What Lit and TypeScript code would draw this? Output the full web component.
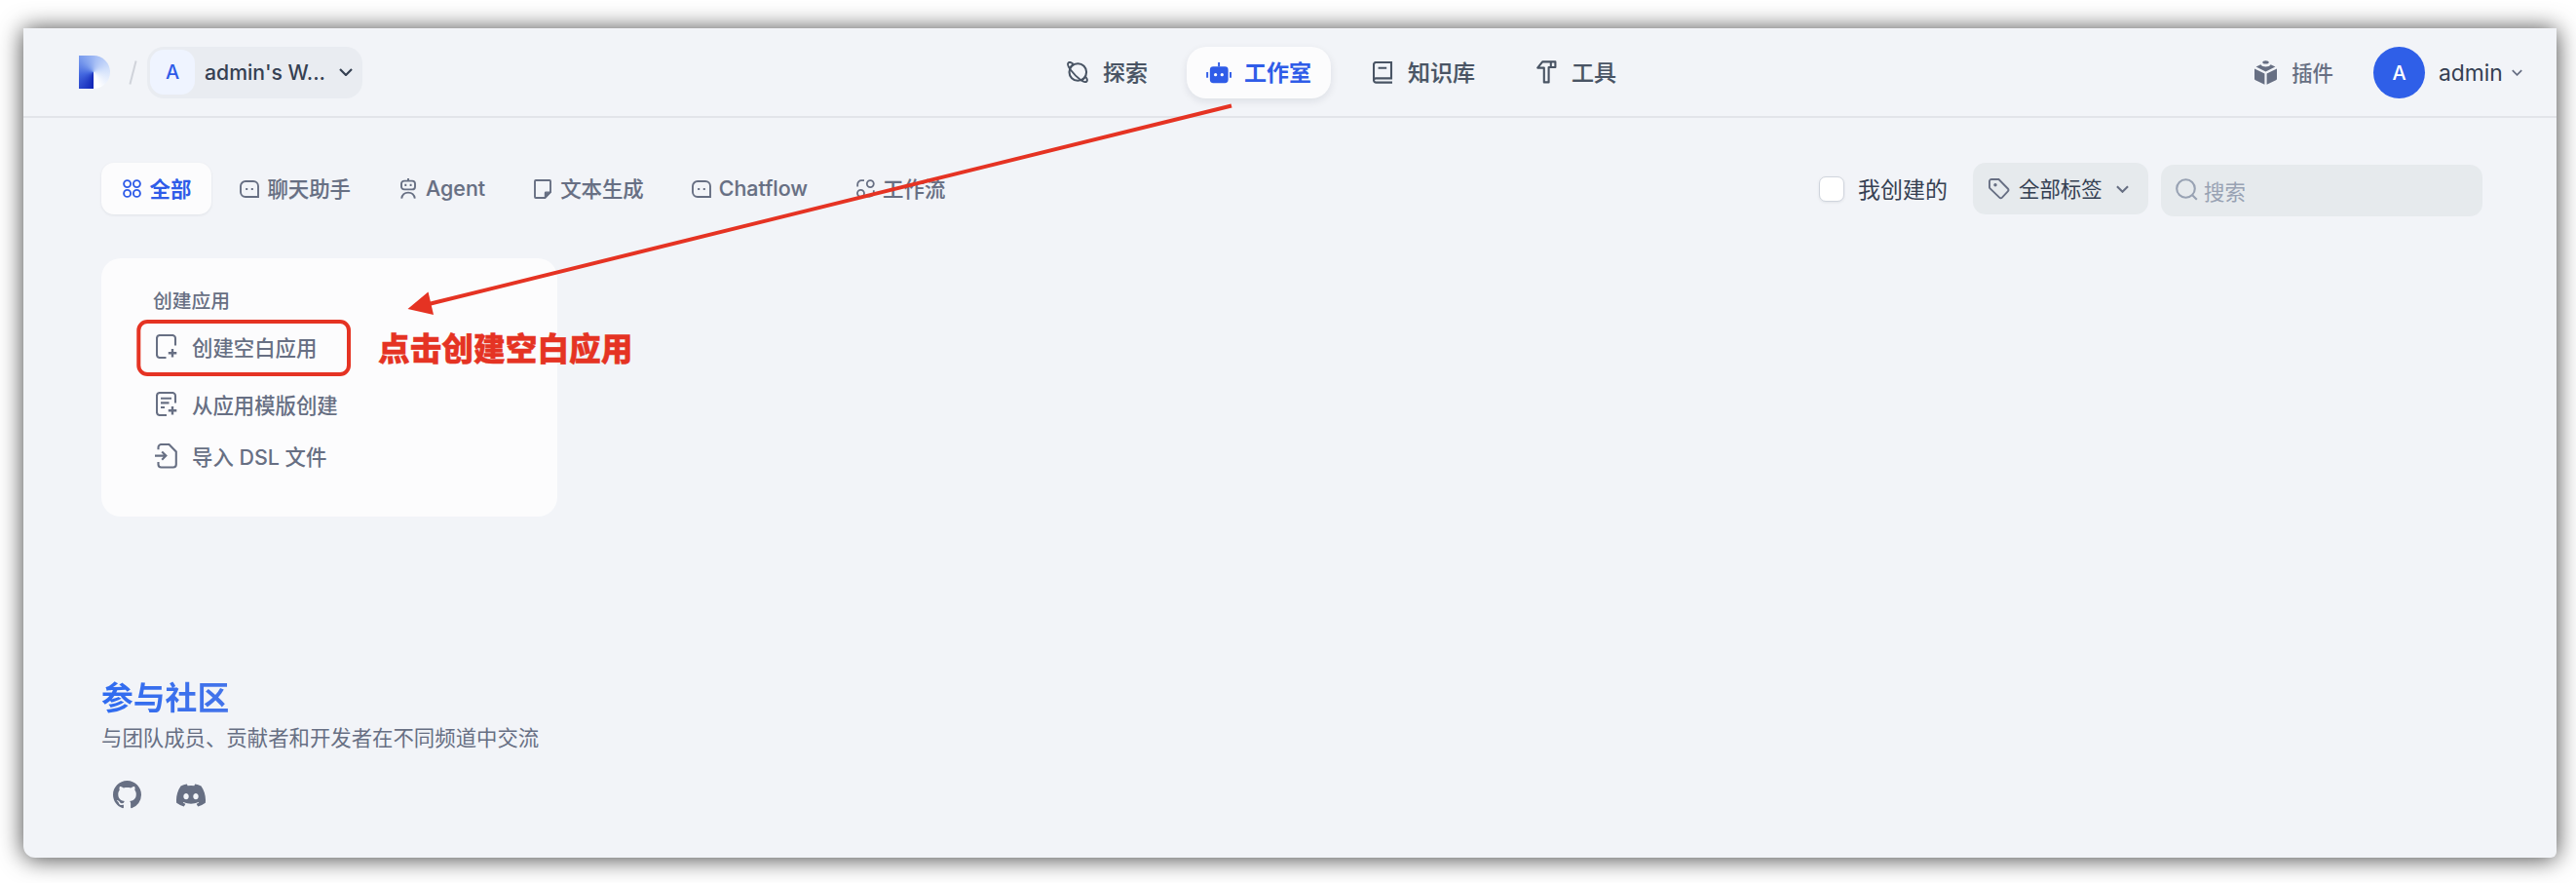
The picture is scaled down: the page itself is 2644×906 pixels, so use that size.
import { css, html, LitElement, svg } from "lit";
import { customElement, state } from "lit/decorators.js";
import { classMap } from "lit/directives/class-map.js";

const icon = (width: number, height: number, content: unknown) => html`
  <svg
    width=${width}
    height=${height}
    viewBox="0 0 ${width} ${height}"
    fill="none"
    stroke="currentColor"
    stroke-width="2.1"
  >
    ${content}
  </svg>
`;

const chatIcon = icon(20, 18, svg`
  <path d="M6 1h8a5 5 0 0 1 5 5v11H6a5 5 0 0 1-5-5V6a5 5 0 0 1 5-5z" stroke-width="1.9" />
  <path d="M6.2 9h2M11.8 9h2" stroke-width="2" />
`);

const icons = {
  explore: icon(22, 22, svg`
    <circle cx="11.3" cy="11" r="8.8" />
    <path d="M6.6 2.8C4.6 1 2.4.6 1.5 1.6c-1.1 1.2 0 4 2.6 7.4 2.8 3.7 6.4 7.3 10 9.9 3 2.1 5.6 2.6 6.4 1.5.8-1 .2-2.7-1-4.4" stroke-width="1.9" />
    <path d="M2.2 6.8 6.6 2.8M15.6 19.6l3.8-3.8" stroke-width="1.5" />
  `),
  studio: icon(27, 23, svg`
    <rect x="4" y="5" width="19.5" height="17.6" rx="3.6" fill="currentColor" stroke="none" />
    <path d="M13.6 5V.5M1.2 11v6M26 11v6" stroke-width="2" />
    <circle cx="10" cy="13.8" r="1.7" fill="#fff" stroke="none" />
    <circle cx="16.9" cy="13.8" r="1.7" fill="#fff" stroke="none" />
  `),
  knowledge: icon(21, 23, svg`
    <path d="M20 21.6H3.4A2.4 2.4 0 0 1 1 19.2V3.2A2.2 2.2 0 0 1 3.2 1H19v16.4H3.2A2.1 2.1 0 0 0 1 19.5M5.6 6.8h8.6" />
  `),
  tools: icon(21, 24, svg`
    <path d="M1.2 7.6 6.2 1.4H19.4V7H12.6V22.4H7.8V7.6Z" stroke-linejoin="round" />
    <path d="M14.8 1.4V7" />
  `),
  plugin: icon(23, 25, svg`
    <g fill="currentColor" stroke="none">
      <path d="M0 8.4 10.4 13.5V24.8L1 20.3A1.8 1.8 0 0 1 0 18.7ZM23 8.4 12.6 13.5V24.8L22 20.3a1.8 1.8 0 0 0 1-1.6Z" />
      <path d="M1.6 6.6 6.4 4.2C8 7.2 15 7.2 16.6 4.2L21.4 6.6 11.5 11.4Z" />
      <ellipse cx="11.5" cy="1.9" rx="3.2" ry="1.7" />
    </g>
  `),
  all: icon(19, 19, svg`
    <g stroke-width="1.9">
      <circle cx="4.6" cy="4.6" r="3.5" />
      <circle cx="14.4" cy="4.6" r="3.5" />
      <circle cx="4.6" cy="14.4" r="3.5" />
      <circle cx="14.4" cy="14.4" r="3.5" />
    </g>
  `),
  chat: chatIcon,
  agent: icon(16, 21, svg`
    <rect x="1" y="2.6" width="14" height="8.8" rx="3" stroke-width="1.9" />
    <path d="M8 0v2.6M5.3 5.8v2.2M10.6 5.8v2.2" stroke-width="1.9" />
    <path d="M1.2 20.6c.6-3.8 3-6 6.8-6s6.2 2.2 6.8 6" stroke-width="1.9" />
  `),
  completion: icon(18, 20, svg`
    <path d="M1.9 1H16.1a.9.9 0 0 1 .9.9V13.2L11.4 19H1.9A.9.9 0 0 1 1 18.1V1.9A.9.9 0 0 1 1.9 1Z" stroke-width="1.9" />
    <path d="M11.4 19V14a.8.8 0 0 1 .8-.8H17Z" fill="currentColor" stroke-width="1.2" />
  `),
  workflow: icon(19, 19, svg`
    <circle cx="14.3" cy="4.6" r="3.5" stroke-width="1.8" />
    <circle cx="4.5" cy="14.3" r="3.5" stroke-width="1.8" />
    <path d="M1.2 7.6V5.2A4 4 0 0 1 5.2 1.2H8M17.8 11.2v2.4a4 4 0 0 1-4 4H11" stroke-width="1.8" />
  `),
  tag: icon(22, 22, svg`
    <path d="M3 1h7.5L19.8 10.5a2 2 0 0 1 0 2.8L14 19.6a2 2 0 0 1-2.8 0L1.6 10.4A2 2 0 0 1 1 9V3a2 2 0 0 1 2-2Z" stroke-width="1.9" />
    <circle cx="7" cy="6.8" r="1.7" fill="currentColor" stroke="none" />
  `),
  search: icon(23, 23, svg`
    <circle cx="10.5" cy="10.5" r="9.3" />
    <path d="m17.2 17.2 4.6 4.6" />
  `),
  blank: icon(22, 25, svg`
    <path d="M20 11.5V4a3 3 0 0 0-3-3H4a3 3 0 0 0-3 3V21a3 3 0 0 0 3 3H10.5" />
    <path d="M17 15v8.5M12.8 19.2h8.5" stroke-width="2.4" />
  `),
  template: icon(22, 25, svg`
    <path d="M20 11.5V4a3 3 0 0 0-3-3H4a3 3 0 0 0-3 3V21a3 3 0 0 0 3 3H11M5 6.8h11M5 11.4h8.5M5 16h4" />
    <path d="M17 15v8.5M12.8 19.2h8.5" stroke-width="2.4" />
  `),
  dsl: icon(23, 26, svg`
    <path d="M3.5 6.2V4A3 3 0 0 1 6.5 1H14.5L21.8 8.4V21.5a3 3 0 0 1-3 3H6.5a3 3 0 0 1-3-3V19" />
    <path d="M0 12.6H11M7.2 8.4l4.2 4.2-4.2 4.2" />
  `),
  github: html`
    <svg width="29" height="29" viewBox="0 0 16 16" fill="currentColor">
      <path d="M8 0C3.58 0 0 3.58 0 8c0 3.54 2.29 6.53 5.47 7.59.4.07.55-.17.55-.38 0-.19-.01-.82-.01-1.49-2.01.37-2.53-.49-2.69-.94-.09-.23-.48-.94-.82-1.13-.28-.15-.68-.52-.01-.53.63-.01 1.08.58 1.23.82.72 1.21 1.87.87 2.33.66.07-.52.28-.87.51-1.07-1.78-.2-3.64-.89-3.64-3.95 0-.87.31-1.59.82-2.15-.08-.2-.36-1.02.08-2.12 0 0 .67-.21 2.2.82.64-.18 1.32-.27 2-.27s1.36.09 2 .27c1.53-1.04 2.2-.82 2.2-.82.44 1.1.16 1.92.08 2.12.51.56.82 1.27.82 2.15 0 3.07-1.87 3.75-3.65 3.95.29.25.54.73.54 1.48 0 1.07-.01 1.93-.01 2.2 0 .21.15.46.55.38A8.01 8.01 0 0 0 16 8c0-4.42-3.58-8-8-8z" />
    </svg>
  `,
  discord: html`
    <svg width="30" height="30" viewBox="0 0 24 24" fill="currentColor">
      <path d="M20.317 4.37a19.791 19.791 0 0 0-4.885-1.515.074.074 0 0 0-.079.037c-.21.375-.444.864-.608 1.25a18.27 18.27 0 0 0-5.487 0 12.64 12.64 0 0 0-.617-1.25.077.077 0 0 0-.079-.037A19.736 19.736 0 0 0 3.677 4.37a.07.07 0 0 0-.032.027C.533 9.046-.32 13.58.099 18.057a.082.082 0 0 0 .031.057 19.9 19.9 0 0 0 5.993 3.03.078.078 0 0 0 .084-.028c.462-.63.874-1.295 1.226-1.994a.076.076 0 0 0-.041-.106 13.107 13.107 0 0 1-1.872-.892.077.077 0 0 1-.008-.128c.126-.094.252-.192.372-.292a.074.074 0 0 1 .077-.01c3.928 1.793 8.18 1.793 12.062 0a.074.074 0 0 1 .078.01c.12.098.246.198.373.292a.077.077 0 0 1-.006.127 12.299 12.299 0 0 1-1.873.892.077.077 0 0 0-.041.107c.36.698.772 1.362 1.225 1.993a.076.076 0 0 0 .084.028 19.839 19.839 0 0 0 6.002-3.03.077.077 0 0 0 .032-.054c.5-5.177-.838-9.674-3.549-13.66a.061.061 0 0 0-.031-.03zM8.02 15.33c-1.183 0-2.157-1.085-2.157-2.419 0-1.333.956-2.419 2.157-2.419 1.21 0 2.176 1.096 2.157 2.42 0 1.333-.956 2.418-2.157 2.418zm7.975 0c-1.183 0-2.157-1.085-2.157-2.419 0-1.333.955-2.419 2.157-2.419 1.21 0 2.176 1.096 2.157 2.42 0 1.333-.946 2.418-2.157 2.418z" />
    </svg>
  `,
};

const chevron = (width: number, height: number) => html`
  <svg width=${width} height=${height} viewBox="0 0 14 8" fill="none" stroke="currentColor" stroke-width="2.2">
    <path d="m1 1 6 6 6-6" />
  </svg>
`;

const navItems = [
  { id: "explore", label: "探索", icon: icons.explore },
  { id: "studio", label: "工作室", icon: icons.studio },
  { id: "knowledge", label: "知识库", icon: icons.knowledge },
  { id: "tools", label: "工具", icon: icons.tools },
];

const tabs = [
  { id: "all", label: "全部", icon: icons.all },
  { id: "chat", label: "聊天助手", icon: icons.chat },
  { id: "agent", label: "Agent", icon: icons.agent },
  { id: "completion", label: "文本生成", icon: icons.completion },
  { id: "chatflow", label: "Chatflow", icon: icons.chat },
  { id: "workflow", label: "工作流", icon: icons.workflow },
];

@customElement("app-header")
export class AppHeader extends LitElement {
  static styles = css`
    :host {
      display: grid;
      grid-template-columns: 1049px auto 1fr;
      align-items: center;
      height: 90px;
      border-bottom: 2px solid #e2e4e9;
    }

    .left,
    .nav,
    .nav-item,
    .workspace,
    .right,
    .plugins {
      display: flex;
      align-items: center;
    }

    .left {
      padding-left: 57px;
    }

    .logo {
      width: 32px;
      height: 34px;
      border-radius: 0 17px 17px 0;
      background: conic-gradient(
        from 180deg at 47% 50%,
        #1024b6,
        #4468e0 80deg,
        #7d9eee 140deg,
        #a6bef5 190deg,
        #d3e1fb 260deg,
        #ffffff 340deg
      );
    }

    .slash {
      margin: 0 10px 0 19px;
      color: #d0d3da;
    }

    .workspace {
      box-sizing: border-box;
      width: 221px;
      height: 53px;
      padding: 0 10px 0 3px;
      border-radius: 17px;
      background: #e9ecf1;
      color: #354052;
    }

    .workspace-avatar {
      width: 46px;
      height: 46px;
      margin-right: 10px;
      border-radius: 14px;
      background: #eff4ff;
      color: #2f5ce8;
      font-size: 20px;
      font-weight: 500;
      line-height: 47px;
      text-align: center;
    }

    .workspace-name {
      flex: 1;
      font-size: 21.2px;
      font-weight: 500;
      white-space: nowrap;
    }

    .nav {
      gap: 20px;
    }

    .nav-item {
      height: 53px;
      padding: 0 20px;
      gap: 13px;
      border-radius: 20px;
      color: #495464;
      font-size: 23px;
      font-weight: 500;
      -webkit-text-stroke: 0.2px;
    }

    .nav-item.active {
      background: #fcfcfd;
      color: #2f5ce8;
      font-weight: 700;
      box-shadow: 0 3px 8px rgba(16, 24, 40, 0.09);
      -webkit-text-stroke: 0;
    }

    .nav-icon {
      display: flex;
      justify-content: center;
      width: 26px;
    }

    .nav-label,
    .plugins-label {
      margin-top: -2px;
    }

    .right {
      justify-content: flex-end;
      padding-right: 35px;
      color: #354052;
      font-size: 22.8px;
    }

    .plugins {
      gap: 15px;
      color: #676f83;
      font-size: 21.4px;
      font-weight: 500;
    }

    .user-avatar {
      width: 53px;
      height: 53px;
      margin: 0 14px 0 41px;
      border-radius: 50%;
      background: #2f5fe8;
      color: #fff;
      font-size: 20px;
      font-weight: 500;
      line-height: 54px;
      text-align: center;
    }

    .user-name {
      width: 75px;
    }

    .user-chevron {
      display: flex;
      color: #676f83;
    }
  `;

  render() {
    return html`
      <div class="left">
        <div class="logo"></div>
        <svg class="slash" width="9" height="25" viewBox="0 0 9 25" stroke="currentColor" stroke-width="2">
          <path d="M7.6.5 1.4 24.5" />
        </svg>
        <div class="workspace">
          <div class="workspace-avatar">A</div>
          <div class="workspace-name">admin's W...</div>
          ${chevron(14, 8)}
        </div>
      </div>
      <nav class="nav">
        ${navItems.map(
          (item) => html`
            <div class=${classMap({ "nav-item": true, active: item.id === "studio" })}>
              <span class="nav-icon">${item.icon}</span>
              <span class="nav-label">${item.label}</span>
            </div>
          `,
        )}
      </nav>
      <div class="right">
        <div class="plugins">${icons.plugin}<span class="plugins-label">插件</span></div>
        <div class="user-avatar">A</div>
        <div class="user-name">admin</div>
        <div class="user-chevron">${chevron(11, 7)}</div>
      </div>
    `;
  }
}

@customElement("app-filters")
export class AppFilters extends LitElement {
  static styles = css`
    :host {
      display: flex;
      align-items: flex-start;
      height: 53px;
      color: #676f83;
      font-size: 21.4px;
    }

    .tabs,
    .tab,
    .mine,
    .tags,
    .search {
      display: flex;
      align-items: center;
    }

    .tabs {
      flex: 1;
      gap: 7.6px;
    }

    .tab {
      height: 53px;
      padding: 0 20px;
      gap: 6.5px;
      border-radius: 13px;
      font-weight: 500;
      -webkit-text-stroke: 0.15px;
    }

    .tab.active {
      padding: 0 21px 0 20px;
      background: #fcfcfd;
      color: #2f5ce8;
      font-weight: 700;
      box-shadow: 0 1px 3px rgba(16, 24, 40, 0.08);
      -webkit-text-stroke: 0;
    }

    .tab-icon {
      display: flex;
      justify-content: center;
      width: 23px;
    }

    .tab-label,
    .mine-label,
    .tags-label {
      margin-top: -2px;
    }

    .mine {
      height: 53px;
      gap: 14px;
      margin-right: 26px;
      color: #354052;
      font-size: 23px;
    }

    .checkbox {
      box-sizing: border-box;
      width: 26px;
      height: 26px;
      border: 1.6px solid #d0d5dd;
      border-radius: 7px;
      background: #fff;
      box-shadow: 0 1px 3px rgba(16, 24, 40, 0.08);
    }

    .tags,
    .search {
      box-sizing: border-box;
      height: 53px;
      border-radius: 13px;
      background: #e6eaed;
    }

    .tags {
      width: 180px;
      margin-right: 13px;
      padding: 0 20px 0 16px;
      gap: 9px;
    }

    .tags-label {
      flex: 1;
      color: #354052;
    }

    .search {
      width: 330px;
      margin-top: 2px;
      padding-left: 15px;
      gap: 6px;
      color: #98a2b3;
    }

    .search svg {
      margin-top: -3px;
    }

    .search-label {
      margin-top: -1px;
    }
  `;

  @state() private current = "all";

  render() {
    return html`
      <div class="tabs">
        ${tabs.map(
          (tab) => html`
            <div
              class=${classMap({ tab: true, active: tab.id === this.current })}
              @click=${() => (this.current = tab.id)}
            >
              <span class="tab-icon">${tab.icon}</span>
              <span class="tab-label">${tab.label}</span>
            </div>
          `,
        )}
      </div>
      <div class="mine">
        <span class="checkbox"></span>
        <span class="mine-label">我创建的</span>
      </div>
      <div class="tags">
        ${icons.tag}<span class="tags-label">全部标签</span>${chevron(13, 8)}
      </div>
      <div class="search">${icons.search}<span class="search-label">搜索</span></div>
    `;
  }
}

@customElement("create-card")
export class CreateCard extends LitElement {
  static styles = css`
    :host {
      display: block;
      box-sizing: border-box;
      width: 468px;
      height: 265px;
      padding: 29px 53px 0;
      border-radius: 20px;
      background: #fcfcfd;
      color: #676f83;
      font-weight: 500;
    }

    .title {
      margin-bottom: 5px;
      font-size: 19.8px;
      line-height: 30px;
    }

    .item {
      display: flex;
      align-items: center;
      gap: 13px;
      height: 53px;
      font-size: 21.4px;
    }

    .item.first {
      margin-bottom: 6px;
    }

    .item-icon {
      display: flex;
      justify-content: center;
      width: 27px;
    }

    .item-label {
      margin-top: -1px;
    }
  `;

  render() {
    return html`
      <div class="title">创建应用</div>
      <div class="item first">
        <span class="item-icon">${icons.blank}</span>
        <span class="item-label">创建空白应用</span>
      </div>
      <div class="item">
        <span class="item-icon">${icons.template}</span>
        <span class="item-label">从应用模版创建</span>
      </div>
      <div class="item">
        <span class="item-icon">${icons.dsl}</span>
        <span class="item-label">导入 DSL 文件</span>
      </div>
    `;
  }
}

@customElement("app-root")
export class AppRoot extends LitElement {
  static styles = css`
    :host {
      display: block;
      position: relative;
      box-sizing: border-box;
      height: 906px;
      padding: 29px 20px 26px 24px;
      overflow: hidden;
      background: #fff;
      font-family: Inter, "Noto Sans CJK SC", sans-serif;
    }

    .window {
      height: 851px;
      border-radius: 0 0 6px 12px;
      background: #f2f4f8;
      box-shadow: 0 1px 24px rgba(0, 0, 0, 0.75);
    }

    .content {
      padding: 46px 76px 0 80px;
    }

    create-card {
      margin-top: 45px;
    }

    footer {
      margin-top: 166px;
      color: #676f83;
    }

    h3 {
      width: fit-content;
      margin: 0 0 3px;
      background: linear-gradient(90deg, #2f6bf0, #4474ea);
      background-clip: text;
      -webkit-background-clip: text;
      color: transparent;
      font-size: 32.8px;
      font-weight: 700;
      line-height: 40px;
    }

    p {
      margin: 0 0 14px;
      font-size: 21.4px;
      line-height: 36px;
    }

    .links {
      display: flex;
      gap: 12px;
    }

    .link {
      display: flex;
      align-items: center;
      justify-content: center;
      width: 53px;
      height: 53px;
    }

    .annotation {
      position: absolute;
      inset: 0;
      pointer-events: none;
    }

    .hint {
      fill: #e53323;
      font-size: 32.7px;
      font-weight: 900;
      stroke: #e53323;
      stroke-width: 0.4px;
    }
  `;

  render() {
    return html`
      <div class="window">
        <app-header></app-header>
        <div class="content">
          <app-filters></app-filters>
          <create-card></create-card>
          <footer>
            <h3>参与社区</h3>
            <p>与团队成员、贡献者和开发者在不同频道中交流</p>
            <div class="links">
              <span class="link">${icons.github}</span>
              <span class="link">${icons.discord}</span>
            </div>
          </footer>
        </div>
      </div>
      <svg class="annotation" width="2644" height="906" viewBox="0 0 2644 906">
        <path d="M1264 108.5 440 312" fill="none" stroke="#e53323" stroke-width="4" />
        <path d="M418.5 317 439.5 299.5 445 323Z" fill="#e53323" />
        <rect x="142.3" y="330" width="215.7" height="54" rx="9" fill="none" stroke="#e53323" stroke-width="4" />
        <text class="hint" x="388" y="370">点击创建空白应用</text>
      </svg>
    `;
  }
}
